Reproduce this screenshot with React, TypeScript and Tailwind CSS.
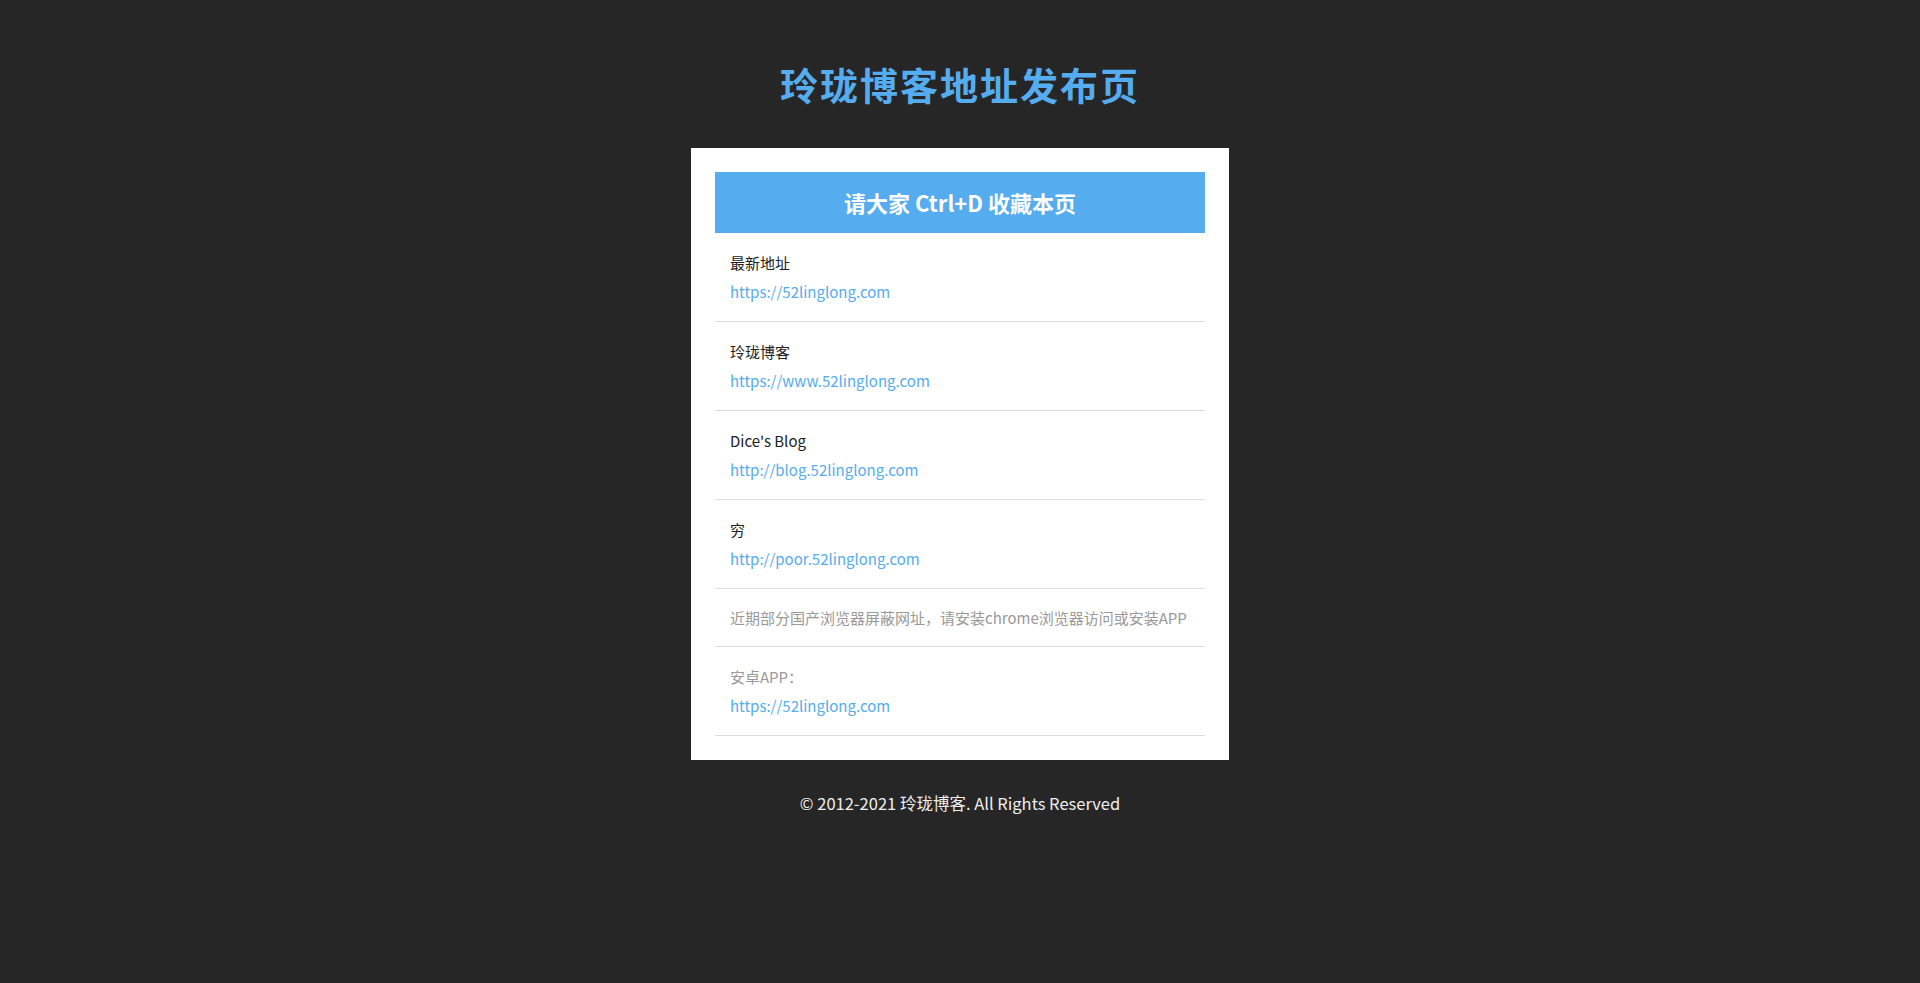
const font = { fontFamily: '"Noto Sans CJK SC", sans-serif' };

type Item = { label: string; url?: string; muted?: boolean };

const items: Item[] = [
  { label: "最新地址", url: "https://52linglong.com" },
  { label: "玲珑博客", url: "https://www.52linglong.com" },
  { label: "Dice's Blog", url: "http://blog.52linglong.com" },
  { label: "穷", url: "http://poor.52linglong.com" },
  { label: "近期部分国产浏览器屏蔽网址，请安装chrome浏览器访问或安装APP", muted: true },
  { label: "安卓APP：", url: "https://52linglong.com", muted: true },
];

function Row({ item }: { item: Item }) {
  return (
    <li className={`border-b border-[#dddddd] px-[15px] ${item.url ? "pt-[18px] pb-[17px]" : "pt-[17px] pb-[16px]"}`}>
      <p className={`text-[15px] leading-[24px] ${item.muted ? "text-[#999999]" : "text-[#222222]"}`}>{item.label}</p>
      {item.url && (
        <a href={item.url} className="mt-[5px] block text-[15px] leading-[24px] text-[#55acee]">
          {item.url}
        </a>
      )}
    </li>
  );
}

export default function App() {
  return (
    <div className="min-h-screen bg-[#262626] pt-[59px]" style={font}>
      <h1 className="text-center text-[38px] font-bold leading-[50px] tracking-[2px] text-[#55acee]">
        玲珑博客地址发布页
      </h1>

      <div className="mx-auto mt-[39px] w-[538px] bg-white p-[24px]">
        <div className="flex h-[61px] items-center justify-center bg-[#55acee] text-[22px] font-bold text-white">
          请大家 Ctrl+D 收藏本页
        </div>
        <ul>
          {items.map((item, i) => (
            <Row key={i} item={item} />
          ))}
        </ul>
      </div>

      <p className="mt-[31px] text-center text-[16.5px] leading-[24px] text-[#eeeeee]">
        © 2012-2021 玲珑博客. All Rights Reserved
      </p>
    </div>
  );
}
